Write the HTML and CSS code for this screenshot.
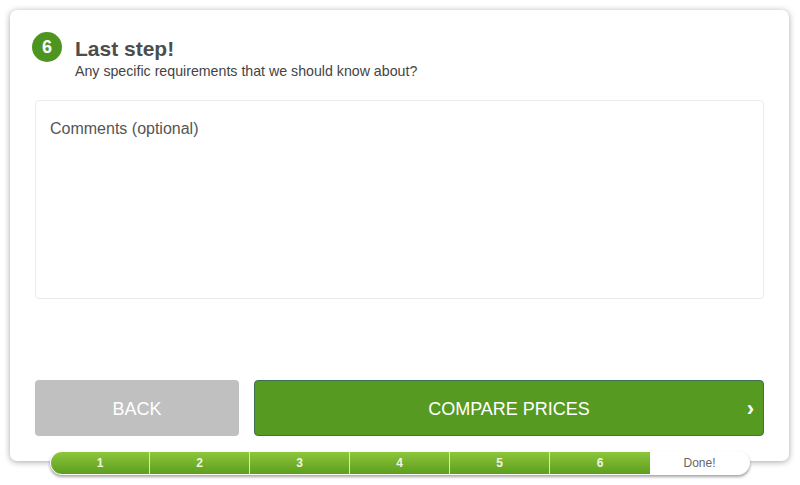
FILE: index.html
```html
<!DOCTYPE html>
<html>
<head>
<meta charset="utf-8">
<link rel="stylesheet" href="styles.css">
</head>
<body>
<div class="wrap">
  <div class="card">
    <div class="header">
      <div class="badge">6</div>
      <div class="titles">
        <h1 class="title">Last step!</h1>
        <p class="subtitle">Any specific requirements that we should know about?</p>
      </div>
    </div>
    <div class="comments">Comments (optional)</div>
    <div class="actions">
      <div class="btn btn-back">BACK</div>
      <div class="btn btn-next"><span>COMPARE PRICES</span><span class="chev">›</span></div>
    </div>
  </div>
  <div class="progress">
    <div class="seg">1</div>
    <div class="seg">2</div>
    <div class="seg">3</div>
    <div class="seg">4</div>
    <div class="seg">5</div>
    <div class="seg">6</div>
    <div class="seg done">Done!</div>
  </div>
</div>
</body>
</html>
```
FILE: styles.css
```css
html, body { margin: 0; padding: 0; background: #fff; }
body { font-family: "Liberation Sans", Arial, sans-serif; min-height: 485px; }
.wrap { padding: 10px 0 0 10px; }
.card {
  box-sizing: border-box;
  width: 779px;
  height: 451px;
  background: #fff;
  border-radius: 7px;
  box-shadow: 0 1px 6px rgba(0,0,0,0.35);
  padding: 22px 25px 0 25px;
}
.header { display: flex; align-items: flex-start; margin-left: -3px; }
.badge {
  width: 30px; height: 30px; border-radius: 50%;
  background: #4d951f; color: #fff;
  font-size: 18px; font-weight: bold;
  display: flex; align-items: center; justify-content: center;
  flex-shrink: 0;
}
.titles { margin-left: 13px; padding-top: 6px; }
.title { margin: 0; font-size: 21px; line-height: 22px; font-weight: bold; color: #4d4d4d; }
.subtitle { margin: 3px 0 0 0; font-size: 14.2px; line-height: 17px; color: #444; }
.comments {
  margin-top: 20px;
  height: 199px;
  box-sizing: border-box;
  border: 1px solid #ebebeb;
  border-radius: 4px;
  padding: 19px 14px;
  font-size: 16px; color: #555; line-height: 18px;
}
.actions { display: flex; gap: 15px; margin-top: 81px; }
.btn {
  height: 56px; box-sizing: border-box; border-radius: 4px;
  display: flex; align-items: center; justify-content: center;
  color: #fff; font-size: 18px; padding-top: 3px;
}
.btn-back { width: 204px; background: #c0c0c0; }
.btn-next {
  width: 510px; background: #579a21; border: 1px solid #3d6f52;
  position: relative;
}
.chev { position: absolute; right: 9px; top: 16px; font-size: 22px; font-weight: bold; line-height: 24px; }
.progress {
  position: relative;
  margin: -10px 0 0 40px;
  width: 700px; height: 24px; box-sizing: border-box;
  display: flex; border-radius: 12px; overflow: hidden;
  border: 1px solid #fff;
  box-shadow: 0 2px 3px rgba(0,0,0,0.35);
  background: #fff;
}
.seg {
  flex: 0 0 100px; box-sizing: border-box;
  background: linear-gradient(#8dc63a, #5c9e1e);
  color: #f0f6e0; font-size: 12px; font-weight: bold;
  display: flex; align-items: center; justify-content: center;
  border-right: 1px solid #d8ecc0;
}
.seg:first-child { flex-basis: 99px; }
.seg.done { background: #fff; color: #666; font-weight: normal; border-right: none; flex: 1 1 auto; }
.seg:nth-child(6) { border-right: none; }
```
